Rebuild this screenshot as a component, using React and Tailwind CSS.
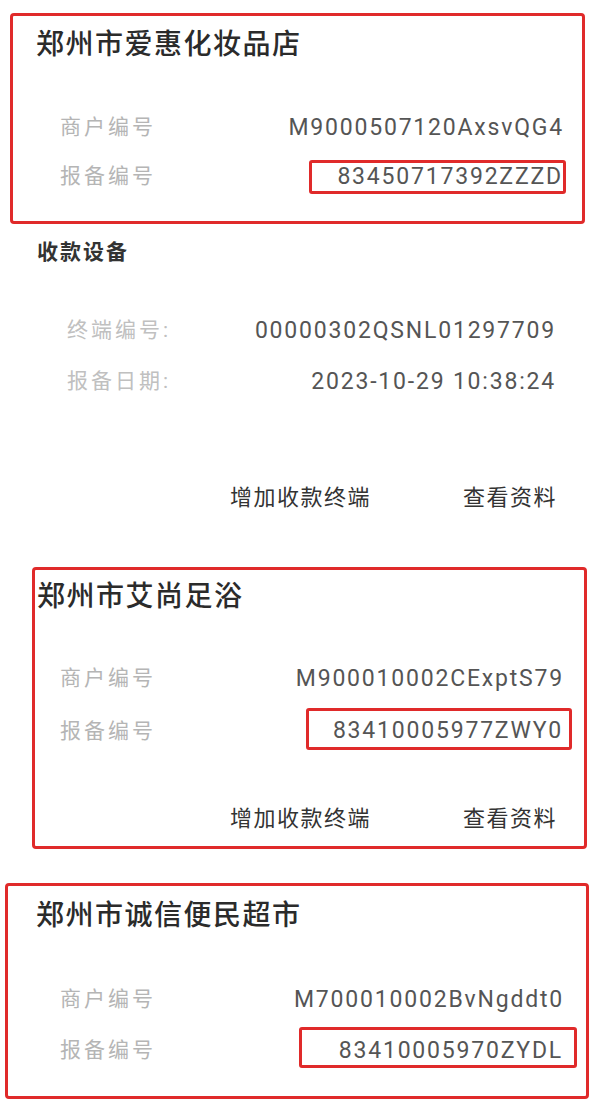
const Row = ({ label, value, box, rowClass, valueClass }) => (
  <div className={`flex items-center justify-between ${rowClass}`}>
    <span className={`text-[21px] tracking-[3px] text-[#b5b5b5] ${box ? box.labelShift : ''}`}>{label}</span>
    {box ? (
      <div className={`flex items-center justify-end rounded-[3px] border-[3px] border-[#e02a2a] ${box.cls}`}>
        <span className="text-[23px] tracking-[1.8px] text-[#555]">{value}</span>
      </div>
    ) : (
      <span className={`text-[23px] tracking-[1.8px] text-[#555] ${valueClass}`}>{value}</span>
    )}
  </div>
);

const Actions = ({ className }) => (
  <div className={`flex h-[34px] items-center justify-end gap-[92px] text-[22px] tracking-[1.5px] text-[#333] ${className}`}>
    <span>增加收款终端</span>
    <span>查看资料</span>
  </div>
);

export default function App() {
  return (
    <div className="min-h-screen bg-white pt-[13px] font-['Roboto','Noto_Sans_CJK_SC',sans-serif]">
      {/* first shop */}
      <div className="ml-[10px] w-[575px] rounded-[4px] border-[3px] border-[#e02a2a] pb-[27px] pl-[23px] pr-[16px] pt-[11px]">
        <h2 className="h-[36px] text-[28px] font-medium leading-[36px] tracking-[1.5px] text-[#2b2b2b]">郑州市爱惠化妆品店</h2>
        <div className="mt-[48px] pl-[24px]">
          <Row label="商户编号" value="M9000507120AxsvQG4" rowClass="h-[34px]" valueClass="pr-[2px]" />
          <Row
            label="报备编号"
            value="83450717392ZZZD"
            rowClass="mt-[15px] h-[34px]"
            box={{ cls: 'h-[34px] w-[257px] pr-0', labelShift: '' }}
          />
        </div>
      </div>

      {/* devices */}
      <h3 className="ml-[37px] mt-[14px] h-[28px] text-[21px] font-semibold leading-[28px] tracking-[2px] text-[#333]">收款设备</h3>
      <div className="mt-[48px] pl-[67px] pr-[53px]">
        <div className="flex h-[34px] items-center justify-between">
          <span className="text-[21px] tracking-[3px] text-[#c0c0c0]">终端编号:</span>
          <span className="text-[23px] tracking-[1.8px] text-[#555]">00000302QSNL01297709</span>
        </div>
        <div className="mt-[17px] flex h-[34px] items-center justify-between">
          <span className="text-[21px] tracking-[3px] text-[#c0c0c0]">报备日期:</span>
          <span className="text-[23px] tracking-[1.8px] text-[#555]">2023-10-29 10:38:24</span>
        </div>
      </div>
      <Actions className="mt-[81px] pr-[52px]" />

      {/* second shop */}
      <div className="ml-[32px] mt-[53px] w-[555px] rounded-[4px] border-[3px] border-[#e02a2a] pb-[11px] pl-[2px] pt-[9px]">
        <h2 className="h-[36px] text-[28px] font-medium leading-[36px] tracking-[1.5px] text-[#2b2b2b]">郑州市艾尚足浴</h2>
        <div className="mt-[47px] pl-[23px] pr-[12px]">
          <Row label="商户编号" value="M900010002CExptS79" rowClass="h-[34px]" valueClass="pr-[8px]" />
          <Row
            label="报备编号"
            value="83410005977ZWY0"
            rowClass="mt-[12px] h-[42px]"
            box={{ cls: 'h-[42px] w-[266px] pr-[6px] pt-[5px]', labelShift: 'pt-[5px]' }}
          />
        </div>
        <Actions className="mt-[51px] pr-[27px]" />
      </div>

      {/* third shop */}
      <div className="ml-[5px] mt-[34px] w-[584px] rounded-[4px] border-[3px] border-[#e02a2a] pb-[28px] pl-[28px] pr-[9px] pt-[12px]">
        <h2 className="h-[36px] text-[28px] font-medium leading-[36px] tracking-[1.5px] text-[#2b2b2b]">郑州市诚信便民超市</h2>
        <div className="mt-[49px] pl-[24px]">
          <Row label="商户编号" value="M700010002BvNgddt0" rowClass="h-[34px]" valueClass="pr-[13px]" />
          <Row
            label="报备编号"
            value="83410005970ZYDL"
            rowClass="mt-[10px] h-[41px]"
            box={{ cls: 'h-[41px] w-[278px] pr-[11px] pt-[7px]', labelShift: 'pt-[7px]' }}
          />
        </div>
      </div>
    </div>
  );
}
